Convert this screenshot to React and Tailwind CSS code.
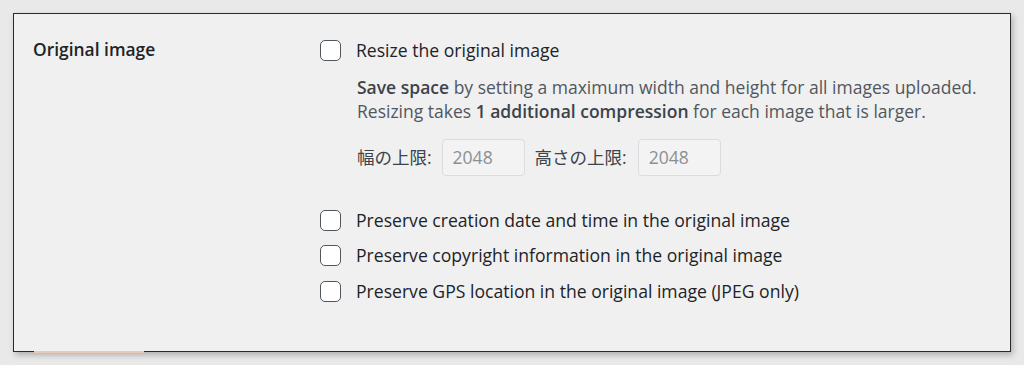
const Box = () => (
  <span className="block w-[21px] h-[21px] shrink-0 rounded-[5px] border-[1.5px] border-[#50575e] bg-white" />
)

const options = [
  "Preserve creation date and time in the original image",
  "Preserve copyright information in the original image",
  "Preserve GPS location in the original image (JPEG only)",
]

export default function App() {
  return (
    <div
      className="w-[1024px] h-[365px] bg-[#e9e9e9] pt-[13px] pl-[13px] overflow-hidden"
      style={{ fontFamily: '"Open Sans", "Noto Sans CJK JP", sans-serif' }}
    >
      <div className="relative w-[998px] h-[339px] bg-[#f0f0f0] border border-[#2a2a2a] shadow-[2px_3px_6px_rgba(0,0,0,0.25)]">
        <div className="flex pt-[23px]">
          <div className="w-[306px] pl-[19px] -mt-[1px] text-[17.4px] font-semibold text-[#1d2327]">
            Original image
          </div>
          <div className="flex flex-col">
            <label className="flex items-center gap-[15px] h-[26px]">
              <Box />
              <span className="text-[17.6px] text-[#1d2327]">Resize the original image</span>
            </label>
            <div className="pl-[37px] pt-[12px] text-[17.5px] leading-[24px] text-[#50575e]">
              <p>
                <b className="font-semibold text-[#3c434a]">Save space</b> by setting a maximum width and height for all images uploaded.
              </p>
              <p>
                Resizing takes <b className="font-semibold text-[#3c434a]">1 additional compression</b> for each image that is larger.
              </p>
            </div>
            <div className="pl-[37px] pt-[16px] flex items-center text-[17.5px] text-[#3c434a]">
              <span>幅の上限:</span>
              <span className="ml-[10px] w-[83px] h-[37px] flex items-center pl-[10px] bg-[#f3f3f3] border border-[#dcdcde] rounded-[4px] text-[#8c8f94]">2048</span>
              <span className="ml-[10px]">高さの上限:</span>
              <span className="ml-[11px] w-[83px] h-[37px] flex items-center pl-[10px] bg-[#f3f3f3] border border-[#dcdcde] rounded-[4px] text-[#8c8f94]">2048</span>
            </div>
            <div className="pt-[31px] flex flex-col gap-[9.5px]">
              {options.map((o) => (
                <label key={o} className="flex items-center gap-[15px] h-[26px]">
                  <Box />
                  <span className="text-[17.6px] text-[#1d2327]">{o}</span>
                </label>
              ))}
            </div>
          </div>
        </div>
        <div className="absolute left-[20px] bottom-[-2px] w-[110px] h-[2px] bg-[#e8c9b8]" />
      </div>
    </div>
  )
}
